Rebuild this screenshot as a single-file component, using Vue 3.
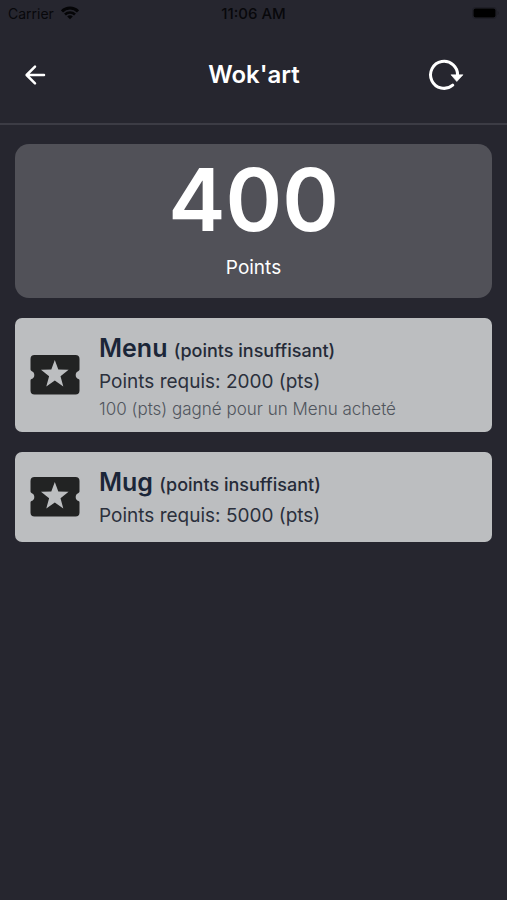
<script setup>
const points = 400

const rewards = [
  { name: 'Menu', required: 2000, note: '100 (pts) gagné pour un Menu acheté' },
  { name: 'Mug', required: 5000, note: '' },
]
</script>

<template>
  <div class="screen">
    <div class="status">
      <div class="carrier">
        <span>Carrier</span>
        <svg width="18" height="14" viewBox="0 0 18 14" fill="none" stroke="#050507" stroke-width="3" aria-hidden="true">
          <path d="M1 5.4C5.4 .9 12.6 .9 17 5.4" />
          <path d="M4 8.5C6.8 5.8 11.2 5.8 14 8.5" stroke-width="2.6" />
          <path d="M9 13.2L6.2 10.4C7.8 9 10.2 9 11.8 10.4Z" fill="#050507" stroke="none" />
        </svg>
      </div>
      <span class="time">11:06 AM</span>
      <div class="power">
        <svg width="27" height="12" viewBox="0 0 27 12" aria-hidden="true">
          <rect x=".5" y=".5" width="24" height="11" rx="3" fill="none" stroke="#1f1f27" />
          <rect x="1.500" y="1.500" width="22" height="9" rx="2" fill="#000" />
          <path d="M25.500 4v4q1.300-.5 1.300-2t-1.300-2z" fill="#1f1f27" />
        </svg>
      </div>
    </div>

    <header class="bar">
      <button class="icon-button back" type="button" aria-label="Retour">
        <svg width="22" height="22" viewBox="0 0 22 22" fill="none" stroke="#fff" stroke-width="2.500" stroke-linecap="round" stroke-linejoin="round">
          <path d="M20 11H2.800M11 2.600L2.600 11l8.400 8.400" />
        </svg>
      </button>
      <h1>Wok'art</h1>
      <button class="icon-button refresh" type="button" aria-label="Actualiser">
        <svg width="36" height="32" viewBox="0 0 36 32">
          <path d="M24.700 26.200A13.500 13.500 0 1 1 29.500 17" fill="none" stroke="#fff" stroke-width="3" stroke-linecap="round" />
          <path d="M23 15.800h12l-6.200 6.700z" fill="#fff" stroke="#fff" stroke-width=".6" stroke-linejoin="round" />
        </svg>
      </button>
    </header>

    <main class="content">
      <section class="balance">
        <strong>{{ points }}</strong>
        <span>Points</span>
      </section>

      <article v-for="reward in rewards" :key="reward.name" class="reward">
        <svg class="ticket" width="50" height="40" viewBox="0 0 50 40" aria-hidden="true">
          <path
            fill="#222323"
            fill-rule="evenodd"
            d="M4.500 0h41Q49.500 0 49.500 4v10.600q0 1-1 1.300a4.400 4.400 0 0 0 0 8.200q1 .3 1 1.300V35.500q0 4-4 4h-41q-4 0-4-4V25.400q0-1 1-1.300a4.400 4.400 0 0 0 0-8.200q-1-.3-1-1.300V4Q.5 0 4.500 0zM24.800 5l-3.500 9.400-10.300.4 8.100 6.400-2.800 10.200 8.500-5.800 8.500 5.800-2.800-10.200 8.100-6.400-10.300-.4z"
          />
        </svg>
        <div class="details">
          <h2>{{ reward.name }} <small>(points insuffisant)</small></h2>
          <p class="required">Points requis: {{ reward.required }} (pts)</p>
          <p v-if="reward.note" class="note">{{ reward.note }}</p>
        </div>
      </article>
    </main>
  </div>
</template>

<style>
body {
  margin: 0;
  background: #26262f;
}
</style>

<style scoped>
.screen {
  min-height: 100vh;
  box-sizing: border-box;
  background: #26262f;
  color: #fff;
  font-family: Inter, "Liberation Sans", sans-serif;
}

.status {
  display: grid;
  grid-template-columns: 1fr auto 1fr;
  align-items: center;
  height: 26px;
  padding: 0 8px;
  color: #08080b;
  font-size: 14px;
}

.carrier {
  display: flex;
  align-items: center;
  gap: 7px;
}

.time {
  font-size: 15px;
  font-weight: 500;
}

.power {
  display: flex;
  justify-content: flex-end;
}

.bar {
  display: grid;
  grid-template-columns: 1fr auto 1fr;
  align-items: center;
  height: 97px;
  padding: 0 43px 0 24px;
  border-bottom: 2px solid #3c3c45;
}

.bar h1 {
  margin: 0;
  padding-left: 20px;
  font-size: 24px;
  font-weight: 600;
  line-height: 32px;
}

.icon-button {
  display: flex;
  padding: 0;
  border: 0;
  background: none;
  cursor: pointer;
}

.refresh {
  justify-self: end;
}

.content {
  display: flex;
  flex-direction: column;
  gap: 20px;
  padding: 19px 15px;
}

.balance {
  display: flex;
  flex-direction: column;
  align-items: center;
  padding: 12px 16px 18px;
  border-radius: 14px;
  background: #515158;
}

.balance strong {
  font-size: 86px;
  font-weight: 600;
  line-height: 88px;
}

.balance span {
  padding-top: 12px;
  font-size: 19px;
  line-height: 24px;
}

.reward {
  display: flex;
  align-items: center;
  gap: 19px;
  padding: 11px 15px;
  border-radius: 7px;
  background: #bcbec0;
  color: #2b303c;
}

.ticket {
  flex: none;
}

.details {
  min-width: 0;
}

.details h2 {
  margin: 0;
  color: #1b2638;
  font-size: 25px;
  font-weight: 600;
  line-height: 38px;
}

.details small {
  color: #252b38;
  font-size: 18px;
  font-weight: 500;
  line-height: 24px;
}

.details p {
  margin: 0;
}

.required {
  font-size: 19px;
  line-height: 30px;
}

.details .note {
  color: #50555d;
  font-size: 17px;
  font-weight: 300;
  line-height: 24px;
}
</style>
